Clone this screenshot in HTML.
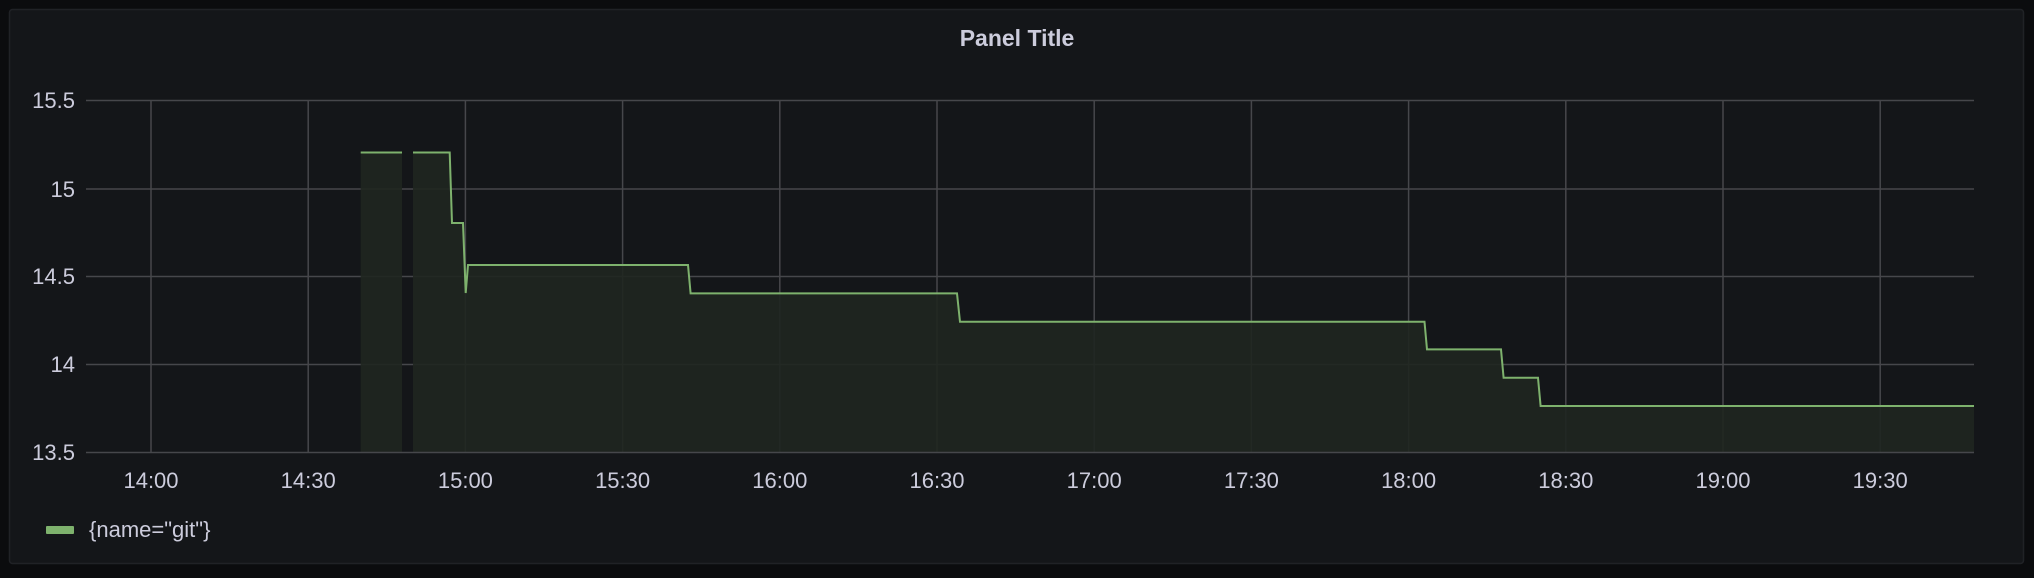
<!DOCTYPE html>
<html><head><meta charset="utf-8"><style>
html,body{margin:0;padding:0;background:#0b0c0e;width:2034px;height:578px;overflow:hidden}
svg{display:block}
text{font-family:"Liberation Sans",sans-serif;fill:#ccccdc}
</style></head><body>
<svg width="2034" height="578" viewBox="0 0 2034 578">
<rect x="9.5" y="9.5" width="2014" height="554" rx="3" fill="#141619" stroke="#202226" stroke-width="1.5"/>
<text x="1017" y="46" text-anchor="middle" font-size="23" font-weight="bold">Panel Title</text>
<g stroke="#46474b" stroke-width="1.5">
<line x1="86" y1="100.5" x2="1974" y2="100.5"/>
<line x1="86" y1="189" x2="1974" y2="189"/>
<line x1="86" y1="276.5" x2="1974" y2="276.5"/>
<line x1="86" y1="364.5" x2="1974" y2="364.5"/>
<line x1="151" y1="100" x2="151" y2="452"/>
<line x1="308.2" y1="100" x2="308.2" y2="452"/>
<line x1="465.4" y1="100" x2="465.4" y2="452"/>
<line x1="622.6" y1="100" x2="622.6" y2="452"/>
<line x1="779.8" y1="100" x2="779.8" y2="452"/>
<line x1="937" y1="100" x2="937" y2="452"/>
<line x1="1094.2" y1="100" x2="1094.2" y2="452"/>
<line x1="1251.4" y1="100" x2="1251.4" y2="452"/>
<line x1="1408.6" y1="100" x2="1408.6" y2="452"/>
<line x1="1565.8" y1="100" x2="1565.8" y2="452"/>
<line x1="1723" y1="100" x2="1723" y2="452"/>
<line x1="1880.2" y1="100" x2="1880.2" y2="452"/>
</g>
<path d="M360.7 152.5 H402 V452.5 H360.7 Z" fill="#1f2620" fill-opacity="0.9"/>
<path d="M413 152.5 H449.7 L452 223 H463 L465.7 293 L468 265 H688 L690.6 293.4 H957 L960 321.8 H1424.5 L1427 349.4 H1501 L1503.6 377.8 H1538 L1540.6 406 H1974 V452.5 H413 Z" fill="#1f2620" fill-opacity="0.9"/>
<line x1="86" y1="452.5" x2="1974" y2="452.5" stroke="#46474b" stroke-width="1.5"/>
<g fill="none" stroke="#7eb26d" stroke-width="2">
<path d="M360.7 152.5 H402"/>
<path d="M413 152.5 H449.7 L452 223 H463 L465.7 293 L468 265 H688 L690.6 293.4 H957 L960 321.8 H1424.5 L1427 349.4 H1501 L1503.6 377.8 H1538 L1540.6 406 H1974"/>
</g>
<g font-size="22" text-anchor="end">
<text x="75" y="108">15.5</text>
<text x="75" y="197">15</text>
<text x="75" y="284">14.5</text>
<text x="75" y="372">14</text>
<text x="75" y="460">13.5</text>
</g>
<g font-size="22" text-anchor="middle">
<text x="151" y="488">14:00</text>
<text x="308.2" y="488">14:30</text>
<text x="465.4" y="488">15:00</text>
<text x="622.6" y="488">15:30</text>
<text x="779.8" y="488">16:00</text>
<text x="937" y="488">16:30</text>
<text x="1094.2" y="488">17:00</text>
<text x="1251.4" y="488">17:30</text>
<text x="1408.6" y="488">18:00</text>
<text x="1565.8" y="488">18:30</text>
<text x="1723" y="488">19:00</text>
<text x="1880.2" y="488">19:30</text>
</g>
<rect x="46" y="526" width="28" height="8" rx="1" fill="#7eb26d"/>
<text x="89" y="537" font-size="22">{name="git"}</text>
</svg>
</body></html>
